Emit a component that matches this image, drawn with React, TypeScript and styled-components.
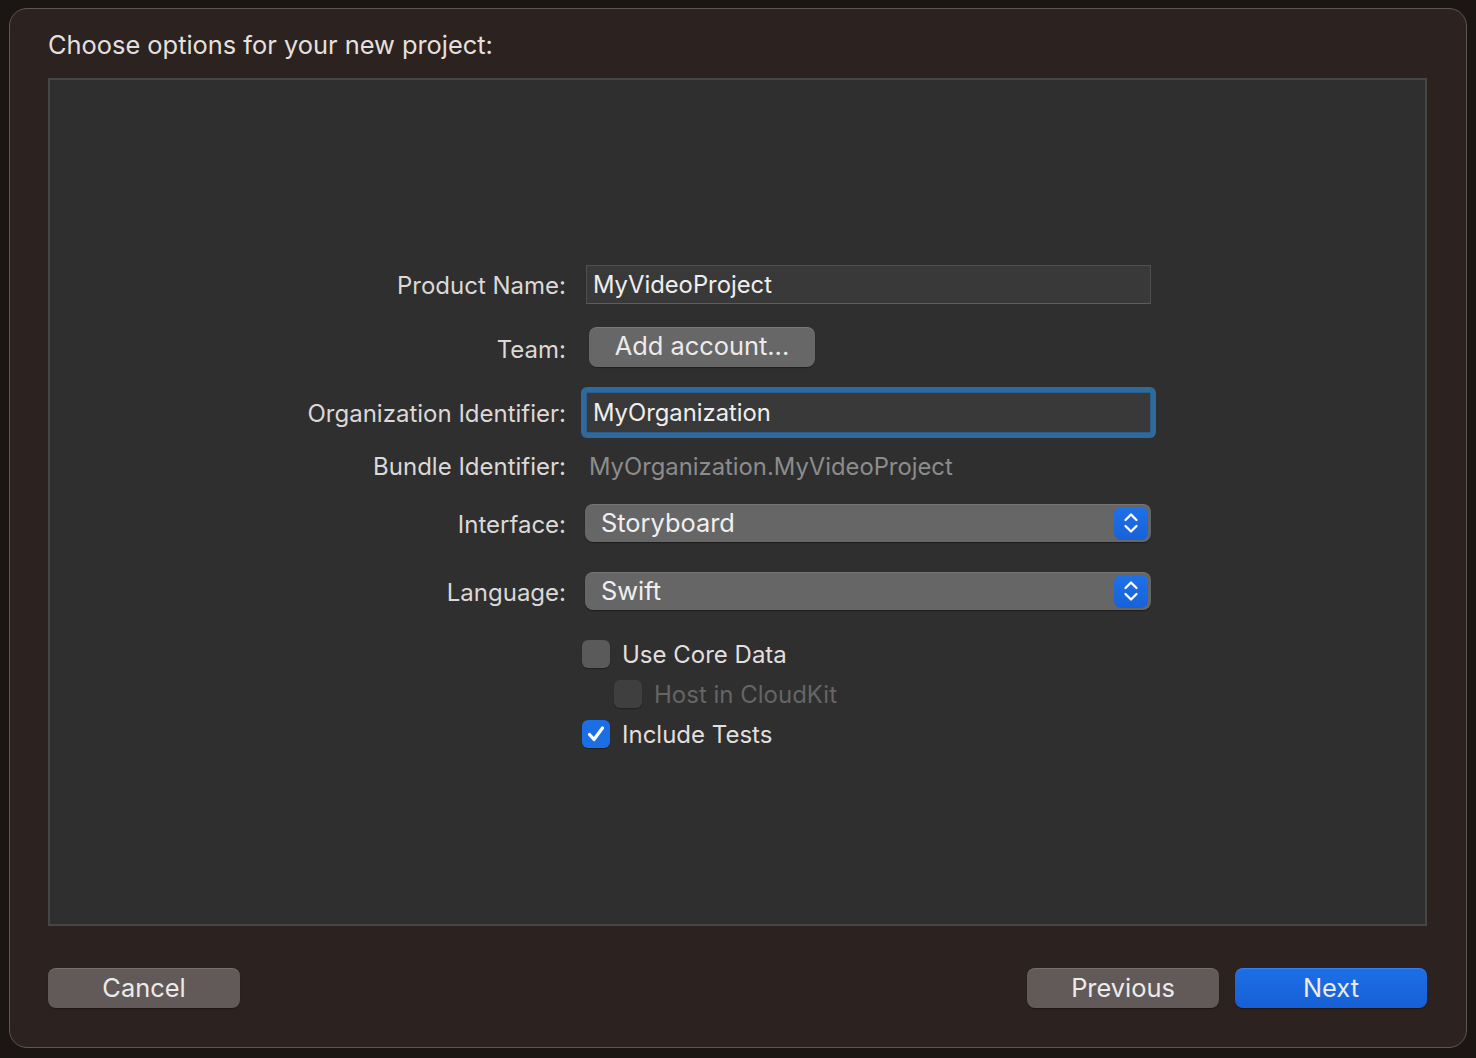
import * as React from 'react';
import styled, { createGlobalStyle } from 'styled-components';

const GlobalStyle = createGlobalStyle`
  html, body {
    margin: 0;
    padding: 0;
    background: #1b1614;
    font-family: Inter, "Noto Sans", "Liberation Sans", sans-serif;
  }
`;

const Page = styled.div`
  width: 1476px;
  height: 1058px;
  padding: 8px 9px 10px 9px;
  box-sizing: border-box;
`;

const Window = styled.div`
  display: flex;
  flex-direction: column;
  height: 100%;
  box-sizing: border-box;
  background: #2c2220;
  border: 1px solid #5e5654;
  border-radius: 18px;
  padding: 18px 39px 39px 38px;
`;

const Title = styled.div`
  font-size: 25.4px;
  color: #e4e0df;
  height: 36px;
  line-height: 36px;
  margin-bottom: 15px;
`;

const Panel = styled.div`
  flex: 1;
  display: flex;
  flex-direction: column;
  background: #2f2f2f;
  border: 2px solid #464646;
  padding: 184px 0 0 0;
`;

const FormRow = styled.div<{ $h: number; $mt?: number }>`
  display: grid;
  grid-template-columns: 516px 1fr;
  column-gap: 20px;
  align-items: center;
  height: ${(p) => p.$h}px;
  margin-top: ${(p) => p.$mt || 0}px;
`;

const Label = styled.div`
  text-align: right;
  font-size: 24px;
  color: #dcd8d7;
  padding-top: 2px;
`;

const Control = styled.div`
  display: flex;
  align-items: center;
  width: 565px;
`;

const TextField = styled.div<{ $focused?: boolean }>`
  box-sizing: border-box;
  width: 565px;
  height: ${(p) => (p.$focused ? 41 : 39)}px;
  background: #393939;
  border: 1px solid #4f4f4f;
  border-bottom-color: #5d5d5d;
  font-size: 23.8px;
  color: #eeeeee;
  padding: 0 6px;
  display: flex;
  align-items: center;
  box-shadow: ${(p) => (p.$focused ? '0 0 0 5px #2f6a9c' : 'none')};
  border-radius: ${(p) => (p.$focused ? '2px' : '0')};
  ${(p) => (p.$focused ? 'border-color: #2b5e8c;' : '')}
`;

const PushButton = styled.div<{ $variant?: 'gray' | 'blue' | 'dark' }>`
  box-sizing: border-box;
  display: flex;
  align-items: center;
  justify-content: center;
  height: 40px;
  border-radius: 8px;
  font-size: 25.4px;
  color: #ecebeb;
  background: ${(p) =>
    p.$variant === 'blue' ? 'linear-gradient(#1d6fe6, #1760d6)' : p.$variant === 'dark' ? '#625a58' : '#676767'};
  box-shadow: 0 1px 1px rgba(0, 0, 0, 0.35), inset 0 1px 0 rgba(255, 255, 255, 0.12);
`;

const TeamButton = styled(PushButton)`
  width: 226px;
  margin-left: 3px;
  margin-top: -2px;
  padding-bottom: 3px;
`;

const StaticValue = styled.div`
  font-size: 23.8px;
  color: #8c8c8c;
  padding-left: 3px;
  padding-top: 1px;
`;

const Popup = styled.div`
  box-sizing: border-box;
  width: 566px;
  margin-left: -1px;
  height: 38px;
  border-radius: 8px;
  background: #666666;
  box-shadow: 0 1px 1px rgba(0, 0, 0, 0.4), inset 0 1px 0 rgba(255, 255, 255, 0.1);
  display: flex;
  align-items: center;
  justify-content: space-between;
  padding: 0 3px 0 16px;
  font-size: 25.4px;
  color: #efefef;
`;

const PopupText = styled.span`
  padding-bottom: 2px;
`;

const Stepper = styled.div`
  width: 34px;
  height: 33px;
  border-radius: 7px;
  background: linear-gradient(#1f71e8, #1862d8);
  display: flex;
  align-items: center;
  justify-content: center;
`;

const CheckRow = styled.div<{ $indent?: number; $mt?: number }>`
  display: flex;
  align-items: center;
  gap: 12px;
  height: 28px;
  margin-top: ${(p) => p.$mt || 0}px;
  margin-left: ${(p) => 532 + (p.$indent || 0)}px;
`;

const CheckBox = styled.div<{ $state: 'off' | 'on' | 'disabled' }>`
  width: 28px;
  height: 28px;
  box-sizing: border-box;
  border-radius: 6px;
  display: flex;
  align-items: center;
  justify-content: center;
  background: ${(p) => (p.$state === 'on' ? '#1b6ee4' : p.$state === 'disabled' ? '#3f3f3f' : '#5a5a5a')};
  box-shadow: 0 1px 1px rgba(0, 0, 0, 0.3);
`;

const CheckLabel = styled.span<{ $disabled?: boolean }>`
  font-size: 24px;
  color: ${(p) => (p.$disabled ? '#666464' : '#e2dfde')};
  padding-top: 1px;
`;

const Footer = styled.div`
  display: flex;
  align-items: center;
  margin-top: 42px;
  gap: 16px;
`;

const FooterButton = styled(PushButton)`
  width: 192px;
  padding-bottom: 1px;
`;

const Spacer = styled.div`
  flex: 1;
`;

const StepperIcon = () => (
  <svg width="18" height="26" viewBox="0 0 18 26" fill="none">
    <path d="M3.5 10 L9 4.5 L14.5 10" stroke="#ffffff" strokeWidth="2.3" strokeLinecap="round" strokeLinejoin="round" />
    <path d="M3.5 16 L9 21.5 L14.5 16" stroke="#ffffff" strokeWidth="2.3" strokeLinecap="round" strokeLinejoin="round" />
  </svg>
);

const CheckIcon = () => (
  <svg width="22" height="22" viewBox="0 0 22 22" fill="none">
    <path d="M4.5 11.5 L9 16.5 L17.5 5" stroke="#ffffff" strokeWidth="3.2" strokeLinecap="round" strokeLinejoin="round" />
  </svg>
);

export default function App() {
  return (
    <Page>
      <GlobalStyle />
      <Window>
        <Title>Choose options for your new project:</Title>
        <Panel>
          <FormRow $h={40}>
            <Label>Product Name:</Label>
            <Control>
              <TextField>MyVideoProject</TextField>
            </Control>
          </FormRow>
          <FormRow $h={40} $mt={24}>
            <Label>Team:</Label>
            <Control>
              <TeamButton>Add account...</TeamButton>
            </Control>
          </FormRow>
          <FormRow $h={52} $mt={18}>
            <Label>Organization Identifier:</Label>
            <Control>
              <TextField $focused>MyOrganization</TextField>
            </Control>
          </FormRow>
          <FormRow $h={24} $mt={12}>
            <Label>Bundle Identifier:</Label>
            <StaticValue>MyOrganization.MyVideoProject</StaticValue>
          </FormRow>
          <FormRow $h={38} $mt={30}>
            <Label>Interface:</Label>
            <Popup>
              <PopupText>Storyboard</PopupText>
              <Stepper>
                <StepperIcon />
              </Stepper>
            </Popup>
          </FormRow>
          <FormRow $h={38} $mt={30}>
            <Label>Language:</Label>
            <Popup>
              <PopupText>Swift</PopupText>
              <Stepper>
                <StepperIcon />
              </Stepper>
            </Popup>
          </FormRow>
          <CheckRow $mt={30}>
            <CheckBox $state="off" />
            <CheckLabel>Use Core Data</CheckLabel>
          </CheckRow>
          <CheckRow $mt={12} $indent={32}>
            <CheckBox $state="disabled" />
            <CheckLabel $disabled>Host in CloudKit</CheckLabel>
          </CheckRow>
          <CheckRow $mt={12}>
            <CheckBox $state="on">
              <CheckIcon />
            </CheckBox>
            <CheckLabel>Include Tests</CheckLabel>
          </CheckRow>
        </Panel>
        <Footer>
          <FooterButton $variant="dark">Cancel</FooterButton>
          <Spacer />
          <FooterButton $variant="dark">Previous</FooterButton>
          <FooterButton $variant="blue">Next</FooterButton>
        </Footer>
      </Window>
    </Page>
  );
}
